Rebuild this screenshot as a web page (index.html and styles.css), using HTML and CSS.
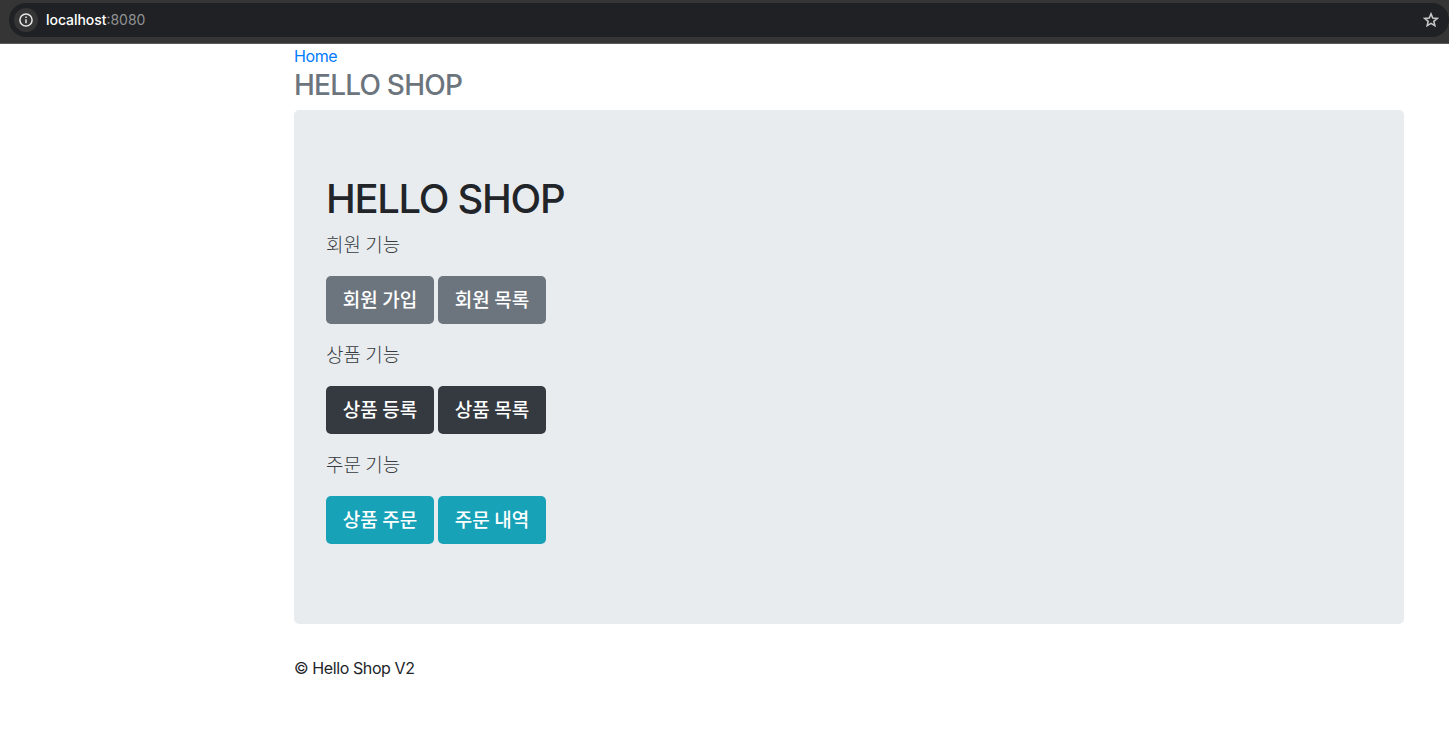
FILE: index.html
```html
<!DOCTYPE html>
<html lang="ko">
<head>
    <meta charset="UTF-8">
    <meta name="viewport" content="width=device-width, initial-scale=1.0">
    <title>Hello</title>
    <link rel="stylesheet" href="styles.css">
</head>
<body>
    <!-- address bar -->
    <div class="browser-bar">
        <div class="address">
            <span class="site-info">
                <svg width="14" height="14" viewBox="0 0 14 14" fill="none" stroke="#e8e8e8" stroke-width="1.5">
                    <circle cx="7" cy="7" r="6.1"/>
                    <path d="M7 6.2v4M7 3.6v1.5"/>
                </svg>
            </span>
            <span class="url"><span class="host">localhost</span><span class="port">:8080</span></span>
            <svg class="star" width="16" height="16" viewBox="0 0 16 16" fill="none" stroke="#c7c7c7" stroke-width="1.6">
                <path d="M8 1.9l1.75 4.1 4.45.4-3.38 2.93 1.02 4.35L8 11.35l-3.84 2.33 1.02-4.35L1.8 6.4 6.25 6z"/>
            </svg>
        </div>
    </div>

    <div class="container">
        <div class="header">
            <a class="home" href="/">Home</a>
            <h3 class="text-muted">HELLO SHOP</h3>
        </div>

        <div class="jumbotron">
            <h1>HELLO SHOP</h1>
            <p class="lead">회원 기능</p>
            <p class="buttons">
                <a class="btn btn-secondary" href="/members/new">회원 가입</a>
                <a class="btn btn-secondary" href="/members">회원 목록</a>
            </p>
            <p class="lead">상품 기능</p>
            <p class="buttons">
                <a class="btn btn-dark" href="/items/new">상품 등록</a>
                <a class="btn btn-dark" href="/items">상품 목록</a>
            </p>
            <p class="lead">주문 기능</p>
            <p class="buttons">
                <a class="btn btn-info" href="/order">상품 주문</a>
                <a class="btn btn-info" href="/orders">주문 내역</a>
            </p>
        </div>

        <div class="footer">
            <p>© Hello Shop V2</p>
        </div>
    </div>
</body>
</html>
```

FILE: styles.css
```css
* {
    box-sizing: border-box;
}
body {
    margin: 0;
    background: #fff;
    color: #212529;
    font-family: Inter, "Noto Sans CJK KR", sans-serif;
    font-size: 16px;
    line-height: 1.5;
}
h1, h3, p {
    margin: 0;
}
a {
    text-decoration: none;
}

/* address bar */
.browser-bar {
    height: 44px;
    padding: 3px 0 0 9px;
    background: #353535;
    border-bottom: 1px solid #5a5a5a;
    overflow: hidden;
}
.address {
    display: flex;
    align-items: center;
    height: 34px;
    padding: 0 10px 0 5px;
    background: #202124;
    border-radius: 17px;
}
.site-info {
    display: flex;
    align-items: center;
    justify-content: center;
    width: 24px;
    height: 24px;
    margin-right: 8px;
    background: #353535;
    border-radius: 50%;
}
.url {
    flex: 1;
    padding-bottom: 1px;
    font-size: 14px;
    line-height: 20px;
}
.host {
    color: #fff;
    font-weight: 500;
    letter-spacing: -0.05px;
}
.port {
    color: #919294;
}

.container {
    width: 1140px;
    margin-left: 279px;
    padding: 0 15px;
}
.home {
    display: block;
    color: #007bff;
    letter-spacing: -0.4px;
}
.header h3 {
    height: 34px;
    margin-bottom: 8px;
    font-size: 28px;
    font-weight: 550;
    line-height: 34px;
    letter-spacing: -0.78px;
}
.text-muted {
    color: #6c757d;
}

.jumbotron {
    margin-bottom: 32px;
    padding: 64px 32px;
    background: #e9ecef;
    border-radius: 5px;
}
.jumbotron h1 {
    height: 48px;
    margin-bottom: 8px;
    padding-top: 1px;
    font-size: 40px;
    font-weight: 550;
    line-height: 48px;
    letter-spacing: -1.3px;
}
.lead {
    height: 30px;
    margin-bottom: 16px;
    color: #363b40;
    font-size: 19px;
    font-weight: 200;
    line-height: 31px;
    word-spacing: -1px;
}
.buttons {
    display: flex;
    gap: 4px;
    margin-bottom: 16px;
}
.btn {
    width: 108px;
    height: 48px;
    padding-top: 9px;
    border-radius: 5px;
    color: #fff;
    font-size: 19px;
    font-weight: 500;
    line-height: 31px;
    word-spacing: -0.5px;
    text-align: center;
}
.btn-secondary {
    background: #6c757d;
}
.btn-dark {
    background: #343a40;
}
.btn-info {
    background: #17a2b8;
}
.footer {
    letter-spacing: -0.4px;
}
```
